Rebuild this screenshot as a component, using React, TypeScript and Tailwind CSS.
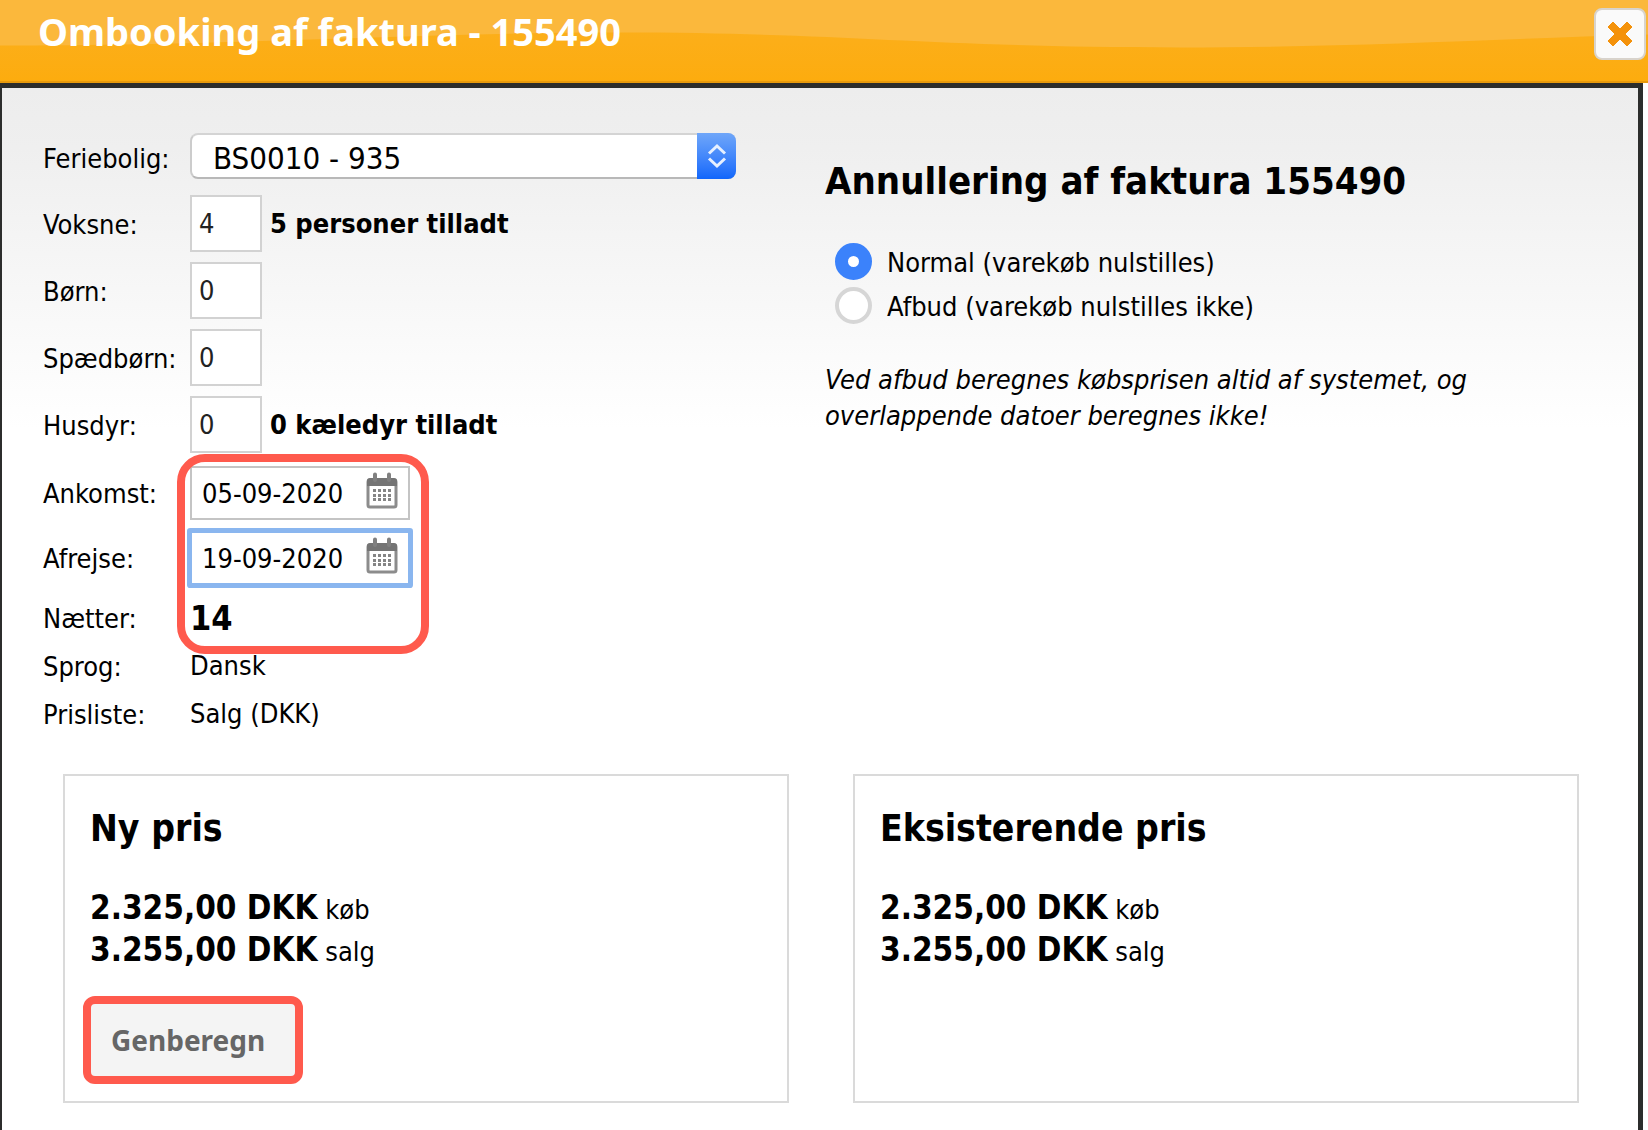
import React, { useState } from 'react';

function CalendarIcon() {
  return (
    <svg viewBox="0 0 32 38" className="h-[38px] w-8" fill="none" aria-hidden="true">
      <rect x="2" y="8" width="28" height="27" rx="2" stroke="#8c8c8c" strokeWidth="3" />
      <path d="M1 8.500Q1 6 4 6H28Q31 6 31 8.500V14H1Z" fill="#747474" />
      <path d="M9 2.500V8M23 2.500V8" stroke="#808080" strokeWidth="4" strokeLinecap="round" />
      <g fill="#858585">
        {[17, 22, 26].map((y) =>
          [7, 12, 17, 22].map((x) => <rect key={`${x}-${y}`} x={x} y={y} width="3" height="3" />),
        )}
      </g>
    </svg>
  );
}

function Row({ label, htmlFor, className, children }: { label: string; htmlFor?: string; className: string; children: React.ReactNode }) {
  return (
    <div className={`flex items-center ${className}`}>
      {htmlFor ? (
        <label htmlFor={htmlFor} className="w-[147px] shrink-0 pt-0.5">{label}</label>
      ) : (
        <span className="w-[147px] shrink-0 pt-0.5">{label}</span>
      )}
      {children}
    </div>
  );
}

function CountRow({ id, label, value, note }: { id: string; label: string; value: string; note?: string }) {
  return (
    <Row label={label} htmlFor={id} className="h-[57px]">
      <input
        id={id}
        defaultValue={value}
        className="h-full w-[72px] border-2 border-[#d2d2d2] bg-white pl-[7px] text-[#222] outline-none"
      />
      {note && <strong className="ml-2">{note}</strong>}
    </Row>
  );
}

function DateField({ id, value, active }: { id: string; value: string; active?: boolean }) {
  return (
    <div
      className={
        active
          ? 'flex h-[54px] w-[220px] items-center rounded-[1px] border-2 border-[#8ab6ef] bg-white ring-3 ring-[#8ab6ef]'
          : 'flex h-[54px] w-[220px] items-center border-2 border-[#c4c4c4] bg-white'
      }
    >
      <input id={id} defaultValue={value} className="w-[174px] bg-transparent pt-0.5 pl-2.5 outline-none" />
      <button type="button" aria-label="Vælg dato" className="-mt-1">
        <CalendarIcon />
      </button>
    </div>
  );
}

function PriceCard({ title, children }: { title: string; children?: React.ReactNode }) {
  return (
    <section className="min-h-[329px] border-2 border-[#dadada] bg-white pt-[30px] pl-[25px]">
      <h2 className="text-[37px] leading-[46px] font-bold">{title}</h2>
      <div className="mt-9 leading-10">
        <p><strong className="text-[33px]">2.325,00 DKK</strong> køb</p>
        <p><strong className="text-[33px]">3.255,00 DKK</strong> salg</p>
      </div>
      {children}
    </section>
  );
}

export default function App() {
  const [mode, setMode] = useState('normal');
  const options = [
    { id: 'normal', text: 'Normal (varekøb nulstilles)' },
    { id: 'afbud', text: 'Afbud (varekøb nulstilles ikke)' },
  ];
  return (
    <div className="flex min-h-screen flex-col overflow-hidden bg-white font-['DejaVu_Sans_Condensed','DejaVu_Sans',sans-serif] text-[27px] leading-9 text-black">
      <header className="relative h-[83px] border-b-2 border-[#e89a0c] bg-linear-to-b from-[#fbb01f] to-[#fdac0e]">
        <svg viewBox="0 0 1648 82" preserveAspectRatio="none" className="absolute inset-0 h-full w-full" aria-hidden="true">
          <path d="M0 0H1648V35C1480 40 1350 48 1180 48C930 48 850 33 620 33C400 33 250 46 0 46Z" fill="#fbb83c" />
        </svg>
        <div className="relative flex items-start justify-between pr-0.5 pl-[38px]">
          <h1 className="pt-0.5 font-['Noto_Sans',sans-serif] text-[38px] leading-[58px] font-bold text-white">
            Ombooking af faktura - 155490
          </h1>
          <button type="button" aria-label="Luk" className="mt-2 flex size-[52px] items-center justify-center rounded-lg border-2 border-[#d8d3cc] bg-[#fafafa]">
            <svg viewBox="0 0 24 24" className="size-6" aria-hidden="true">
              <path d="M5 0L12 7L19 0L24 5L17 12L24 19L19 24L12 17L5 24L0 19L7 12L0 5Z" fill="#f4920b" stroke="#f4920b" strokeWidth="1" strokeLinejoin="round" />
            </svg>
          </button>
        </div>
      </header>

      <main className="mr-[5px] flex-1 border-t-5 border-r-5 border-l-2 border-[#2c2d2c] bg-[linear-gradient(to_bottom,#ededed_0px,#efefef_60px,#ffffff_340px)]">
        <div className="flex pt-[45px] pl-[41px]">
          <form className="w-[782px] shrink-0">
            <div className="flex h-[46px] items-center">
              <label htmlFor="bolig" className="w-[147px] shrink-0 pt-1.5">Feriebolig:</label>
              <div className="relative h-full w-[546px]">
                <select
                  id="bolig"
                  className="h-full w-full appearance-none rounded-lg border-2 border-t-[#d4d4d4] border-r-[#d0d0d0] border-b-[#b8b8b8] border-l-[#cccccc] bg-white pt-1 pl-[21px] text-[31px] leading-9 outline-none"
                >
                  <option>BS0010 - 935</option>
                </select>
                <span className="pointer-events-none absolute inset-y-0 right-0 flex w-[39px] items-center justify-center rounded-r-lg bg-linear-to-b from-[#6fa6f9] to-[#0f66fb]">
                  <svg viewBox="0 0 20 26" className="h-[26px] w-5" fill="none" stroke="#e6f0ff" strokeWidth="3" aria-hidden="true">
                    <path d="M2 10.500L10 3L18 10.500M2 15.500L10 23L18 15.500" />
                  </svg>
                </span>
              </div>
            </div>
            <div className="mt-4 flex flex-col gap-2.5">
              <CountRow id="voksne" label="Voksne:" value="4" note="5 personer tilladt" />
              <CountRow id="boern" label="Børn:" value="0" />
              <CountRow id="spaed" label="Spædbørn:" value="0" />
              <CountRow id="husdyr" label="Husdyr:" value="0" note="0 kæledyr tilladt" />
            </div>
            <div className="relative mt-px pt-2.5">
              <div className="pointer-events-none absolute top-0 left-[134px] h-[200px] w-[252px] rounded-[28px] border-8 border-[#ff5a4d]" />
              <Row label="Ankomst:" htmlFor="ankomst" className="h-[57px]">
                <DateField id="ankomst" value="05-09-2020" />
              </Row>
              <Row label="Afrejse:" htmlFor="afrejse" className="mt-2 h-[57px]">
                <DateField id="afrejse" value="19-09-2020" active />
              </Row>
              <Row label="Nætter:" className="mt-2 h-12">
                <strong className="text-[34px]">14</strong>
              </Row>
            </div>
            <Row label="Sprog:" className="mt-1 h-10">Dansk</Row>
            <Row label="Prisliste:" className="mt-2 h-10">Salg (DKK)</Row>
          </form>

          <section className="pt-[25px]">
            <h2 className="text-[38px] leading-[46px] font-bold">Annullering af faktura 155490</h2>
            <fieldset className="mt-[35px] flex flex-col pl-2.5">
              {options.map((o) => (
                <label key={o.id} className="flex h-11 items-center gap-[15px]">
                  <input
                    type="radio"
                    name="mode"
                    checked={mode === o.id}
                    onChange={() => setMode(o.id)}
                    className="size-[37px] appearance-none rounded-full border-4 border-[#d6d6d6] bg-white checked:border-[13px] checked:border-[#3b82fb]"
                  />
                  <span className="pt-1">{o.text}</span>
                </label>
              ))}
            </fieldset>
            <p className="mt-[35px] max-w-[660px] italic">
              Ved afbud beregnes købsprisen altid af systemet, og overlappende datoer beregnes ikke!
            </p>
          </section>
        </div>

        <div className="mt-10 grid grid-cols-2 gap-16 pr-[59px] pb-6 pl-[61px]">
          <PriceCard title="Ny pris">
            <button
              type="button"
              className="mt-6 -ml-[7px] flex h-[88px] w-[220px] items-center rounded-xl border-8 border-[#ff5a4d] bg-[#f4f4f4] pl-5 font-['Noto_Sans',sans-serif] text-[28px] font-bold text-[#666]"
            >
              Genberegn
            </button>
          </PriceCard>
          <PriceCard title="Eksisterende pris" />
        </div>
      </main>
    </div>
  );
}
